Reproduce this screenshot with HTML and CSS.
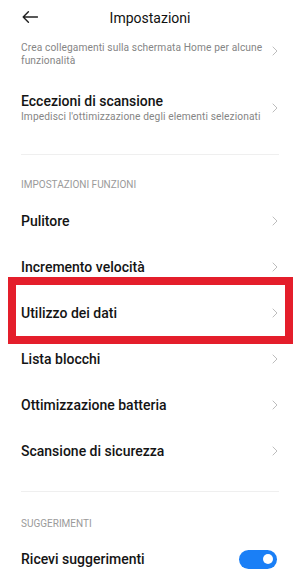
FILE: index.html
```html
<!DOCTYPE html>
<html lang="it">
<head>
<meta charset="utf-8">
<title>Impostazioni</title>
<link rel="stylesheet" href="styles.css">
</head>
<body>
<div class="screen">
  <header class="header">
    <svg class="back" width="16" height="12" viewBox="0 0 16 12"><path d="M15.5 6H1.2M6.4 0.8L1.2 6l5.2 5.2" fill="none" stroke="#222" stroke-width="1.4" stroke-linecap="round" stroke-linejoin="round"/></svg>
    <h1 class="title">Impostazioni</h1>
  </header>

  <div class="item item-first">
    <div class="text">
      <div class="sub">Crea collegamenti sulla schermata Home per alcune funzionalità</div>
    </div>
    <svg class="chev" width="6" height="10" viewBox="0 0 6 10"><path d="M0.7 0.7L5 5L0.7 9.3" fill="none" stroke="#bdbdbd" stroke-width="1"/></svg>
  </div>

  <div class="item item-two">
    <div class="text">
      <div class="label">Eccezioni di scansione</div>
      <div class="sub">Impedisci l'ottimizzazione degli elementi selezionati</div>
    </div>
    <svg class="chev" width="6" height="10" viewBox="0 0 6 10"><path d="M0.7 0.7L5 5L0.7 9.3" fill="none" stroke="#bdbdbd" stroke-width="1"/></svg>
  </div>

  <div class="divider"></div>
  <div class="section">IMPOSTAZIONI FUNZIONI</div>

  <div class="row"><span class="label">Pulitore</span><svg class="chev" width="6" height="10" viewBox="0 0 6 10"><path d="M0.7 0.7L5 5L0.7 9.3" fill="none" stroke="#bdbdbd" stroke-width="1"/></svg></div>
  <div class="row"><span class="label">Incremento velocità</span><svg class="chev" width="6" height="10" viewBox="0 0 6 10"><path d="M0.7 0.7L5 5L0.7 9.3" fill="none" stroke="#bdbdbd" stroke-width="1"/></svg></div>
  <div class="row row-marked"><span class="label">Utilizzo dei dati</span><svg class="chev" width="6" height="10" viewBox="0 0 6 10"><path d="M0.7 0.7L5 5L0.7 9.3" fill="none" stroke="#bdbdbd" stroke-width="1"/></svg><div class="highlight"></div></div>
  <div class="row"><span class="label">Lista blocchi</span><svg class="chev" width="6" height="10" viewBox="0 0 6 10"><path d="M0.7 0.7L5 5L0.7 9.3" fill="none" stroke="#bdbdbd" stroke-width="1"/></svg></div>
  <div class="row"><span class="label">Ottimizzazione batteria</span><svg class="chev" width="6" height="10" viewBox="0 0 6 10"><path d="M0.7 0.7L5 5L0.7 9.3" fill="none" stroke="#bdbdbd" stroke-width="1"/></svg></div>
  <div class="row"><span class="label">Scansione di sicurezza</span><svg class="chev" width="6" height="10" viewBox="0 0 6 10"><path d="M0.7 0.7L5 5L0.7 9.3" fill="none" stroke="#bdbdbd" stroke-width="1"/></svg></div>

  <div class="divider divider-two"></div>
  <div class="section section-two">SUGGERIMENTI</div>

  <div class="row"><span class="label">Ricevi suggerimenti</span><span class="toggle"><span class="knob"></span></span></div>
</div>
</body>
</html>
```

FILE: styles.css
```css
* { box-sizing: border-box; }
html, body { margin: 0; padding: 0; background: #fff; }
body { font-family: Roboto, "Noto Sans", "Liberation Sans", sans-serif; color: #161616; }
.screen { width: 300px; height: 574px; overflow: hidden; position: relative; }

.header { height: 36px; position: relative; display: flex; align-items: center; justify-content: center; }
.back { position: absolute; left: 22px; top: 11px; }
.title { margin: 0; font-size: 14px; font-weight: 400; color: #111; }

.item { display: flex; align-items: center; justify-content: space-between; padding: 0 21px; }
.item-first { height: 44px; align-items: flex-start; padding-top: 5px; }
.item-first .chev { margin-top: 5px; }
.item-two { height: 56px; }
.text { display: flex; flex-direction: column; }
.sub { font-size: 10.2px; line-height: 13px; color: #858585; max-width: 254px; letter-spacing: 0.1px; }
.item-two .sub { line-height: 14px; }
.label { font-size: 14px; line-height: 18px; font-weight: 500; color: #141414; }

.chev { flex: none; margin-right: 1px; }

.divider { height: 1px; background: #efefef; margin: 18px 21px 0; }
.section { font-size: 10px; line-height: 14px; color: #9a9a9a; padding: 0 21px; margin-top: 23px; margin-bottom: 6px; }
.divider-two { margin-top: 17px; }
.section-two { margin-top: 25px; margin-bottom: 5px; }

.row { height: 46px; display: flex; align-items: center; justify-content: space-between; padding: 0 21px; position: relative; }
.row .label { font-weight: 500; }

.highlight { position: absolute; left: 8px; top: -13px; width: 285px; height: 67px; border: 8px solid #e41e2b; pointer-events: none; }

.toggle { width: 38px; height: 19px; border-radius: 10px; background: #1a7ff6; position: relative; margin-right: 2px; }
.knob { position: absolute; right: 4px; top: 4.5px; width: 10px; height: 10px; border-radius: 50%; background: #fff; }
```
